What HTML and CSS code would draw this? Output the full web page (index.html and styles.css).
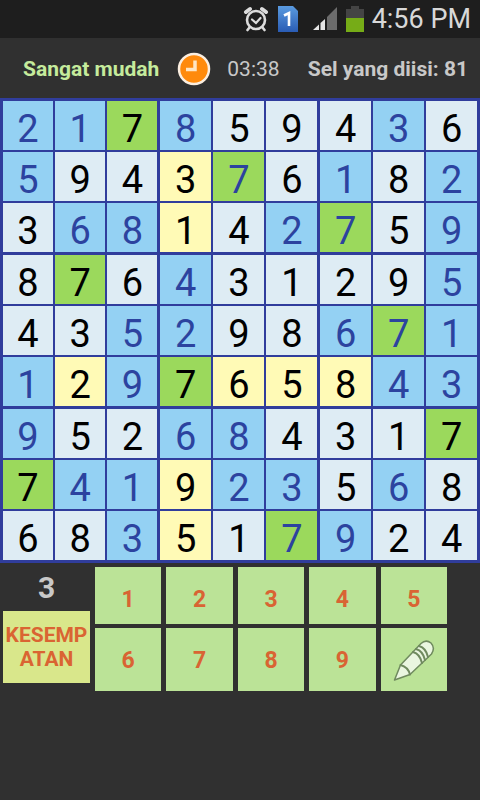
FILE: index.html
```html
<!doctype html>
<html lang="id">
  <head>
    <meta charset="UTF-8" />
    <meta name="viewport" content="width=device-width, initial-scale=1.0" />
    <title>Sudoku</title>
    <link rel="stylesheet" href="styles.css">
  </head>
  <body>
    <div class="status-bar">
      <svg class="alarm-icon" width="26" height="26" viewBox="0 0 26 26" fill="none" stroke="#dcdcdc" stroke-linecap="round">
        <circle cx="13" cy="14" r="9" stroke-width="2.6" />
        <path d="M9 13.5l4 3.5 4.5-5" stroke-width="2.2" />
        <path d="M3 6L7 3M23 6L19 3" stroke-width="4" />
        <path d="M6.5 21.5L4.5 24M19.5 21.5l2 2.5" stroke-width="2.6" />
      </svg>
      <svg class="sim-icon" width="20" height="26" viewBox="0 0 20 26">
        <defs>
          <linearGradient id="sim" x1="0" y1="0" x2="0" y2="1">
            <stop offset="0" stop-color="#5a9be0" />
            <stop offset="1" stop-color="#2a5cb4" />
          </linearGradient>
        </defs>
        <path d="M0 0h15l5 5v21H0z" fill="url(#sim)" />
        <path d="M6 9.5L11 7V20" fill="none" stroke="#fff" stroke-width="2.6" />
      </svg>
      <svg class="signal-icon" width="25" height="24" viewBox="0 0 25 24">
        <path d="M0 23L6 17.5V23z" fill="#e6e6e6" />
        <path d="M7.5 16l4.5-4v11H7.5z" fill="#e6e6e6" />
        <path d="M14 10L24 0v23H14z" fill="#6c6c6c" />
      </svg>
      <svg class="battery-icon" width="18" height="26" viewBox="0 0 18 26">
        <path d="M5 0h8v3h5v9H0V3h5z" fill="#444" />
        <path d="M0 12h18v14H0z" fill="#76ac17" />
      </svg>
      <span class="clock">4:56 PM</span>
    </div>

    <header class="header">
      <span class="level">Sangat mudah</span>
      <svg class="timer-icon" width="34" height="34" viewBox="0 0 34 34">
        <circle cx="17" cy="17" r="15" fill="#ff8a0c" stroke="#fbeee0" stroke-width="2.5" />
        <path d="M18 8.5v9H9" fill="none" stroke="#ffe6c4" stroke-width="3.5" />
      </svg>
      <span class="timer">03:38</span>
      <span class="filled">Sel yang diisi: 81</span>
    </header>

    <main>
      <table class="board">
        <tbody>
          <tr><td class="user">2</td><td class="user">1</td><td class="match">7</td><td class="user">8</td><td>5</td><td>9</td><td>4</td><td class="user">3</td><td>6</td></tr>
          <tr><td class="user">5</td><td>9</td><td>4</td><td class="warm">3</td><td class="user match">7</td><td>6</td><td class="user">1</td><td>8</td><td class="user">2</td></tr>
          <tr><td>3</td><td class="user">6</td><td class="user">8</td><td class="warm">1</td><td>4</td><td class="user">2</td><td class="user match">7</td><td>5</td><td class="user">9</td></tr>
          <tr><td>8</td><td class="match">7</td><td>6</td><td class="user">4</td><td>3</td><td>1</td><td>2</td><td>9</td><td class="user">5</td></tr>
          <tr><td>4</td><td>3</td><td class="user">5</td><td class="user">2</td><td>9</td><td>8</td><td class="user">6</td><td class="user match">7</td><td class="user">1</td></tr>
          <tr><td class="user">1</td><td class="warm">2</td><td class="user">9</td><td class="match">7</td><td class="warm">6</td><td class="warm">5</td><td class="warm">8</td><td class="user">4</td><td class="user">3</td></tr>
          <tr><td class="user">9</td><td>5</td><td>2</td><td class="user">6</td><td class="user">8</td><td>4</td><td>3</td><td>1</td><td class="match">7</td></tr>
          <tr><td class="match">7</td><td class="user">4</td><td class="user">1</td><td class="warm">9</td><td class="user">2</td><td class="user">3</td><td>5</td><td class="user">6</td><td>8</td></tr>
          <tr><td>6</td><td>8</td><td class="user">3</td><td class="warm">5</td><td>1</td><td class="user match">7</td><td class="user">9</td><td>2</td><td>4</td></tr>
        </tbody>
      </table>

      <div class="controls">
        <div class="chances">
          <span class="chances-left">3</span>
          <button class="chance-btn">KESEMPATAN</button>
        </div>
        <div class="keypad">
          <button class="key top">1</button>
          <button class="key top">2</button>
          <button class="key top">3</button>
          <button class="key top">4</button>
          <button class="key top">5</button>
          <button class="key">6</button>
          <button class="key">7</button>
          <button class="key">8</button>
          <button class="key">9</button>
          <button class="key" aria-label="Pensil">
            <svg width="42" height="42" viewBox="0 0 42 42" fill="#eaf6e0" stroke="#6f8a5e" stroke-width="1.5" stroke-linejoin="round" stroke-linecap="round">
              <path d="M1.5 40L7.5 25 28 3.5Q33 -1 38 3Q42.5 8 38.500 14L17 34.5z" />
              <path d="M7.5 25Q15 27 17 34.5" fill="none" stroke-width="2" />
              <path d="M20 12Q27 14 29 23M23 9Q30 11 32 20M26 6Q33 8 35 17" fill="none" stroke-width="2" />
            </svg>
          </button>
        </div>
      </div>
    </main>
  </body>
</html>
```
FILE: styles.css
```css
* {
  margin: 0;
  padding: 0;
  box-sizing: border-box;
}

body {
  font-family: Roboto, sans-serif;
  background: #303030;
  color: #c8c8c8;
  min-height: 100vh;
}

button {
  font-family: inherit;
  border: none;
  cursor: pointer;
}

.status-bar {
  display: flex;
  align-items: center;
  justify-content: flex-end;
  height: 38px;
  padding: 0 9px;
  background: #1e1e1e;
}

.sim-icon {
  margin-left: 9px;
}

.signal-icon {
  margin-left: 15px;
}

.battery-icon {
  margin: 0 8px;
}

.clock {
  font-size: 27px;
  color: #d8d8d8;
}

.header {
  display: flex;
  align-items: center;
  height: 60px;
  padding: 2px 12px 0 23px;
  font-size: 21px;
  white-space: nowrap;
}

.level {
  font-weight: 700;
  color: #c5eb9c;
}

.timer-icon {
  margin: 0 16px 0 18px;
}

.filled {
  margin-left: auto;
  font-weight: 700;
}

.board {
  width: 100%;
  table-layout: fixed;
  border-collapse: collapse;
  border: 3px solid #303d9c;
}

.board td {
  height: 51px;
  padding-top: 7px;
  border: 2px solid #303d9c;
  background: #deecf4;
  color: #000;
  font-size: 38px;
  line-height: 42px;
  text-align: center;
}

.board td:nth-child(-n + 3) {
  width: 11%;
}

.board td:nth-child(3n) {
  border-right-width: 3px;
}

.board tr:nth-child(3n) td {
  border-bottom-width: 3px;
}

.board td:first-child {
  border-left-width: 3px;
}

.board tr:first-child td {
  border-top-width: 3px;
}

.board td.user {
  background: #94d1f3;
  color: #2c439f;
}

.board td.warm {
  background: #fffab6;
}

.board td.match {
  background: #9bd95c;
}

.controls {
  display: flex;
  align-items: flex-start;
  gap: 5px;
  padding: 4px 33px 0 3px;
}

.chances {
  width: 87px;
}

.chances-left {
  display: block;
  height: 44px;
  font-size: 30px;
  font-weight: 700;
  line-height: 42px;
  text-align: center;
}

.chance-btn {
  width: 100%;
  height: 72px;
  background: #d9e78b;
  color: #da6432;
  font-size: 21px;
  font-weight: 700;
  line-height: 24px;
  overflow-wrap: anywhere;
}

.keypad {
  flex: 1;
  display: grid;
  grid-template-columns: repeat(5, 1fr);
  grid-template-rows: 57px 63px;
  gap: 4px 5px;
}

.key {
  display: flex;
  align-items: center;
  justify-content: center;
  padding-top: 2px;
  background: #bbe397;
  color: #d96433;
  font-size: 23px;
  font-weight: 700;
}

.key.top {
  padding-top: 8px;
}
```
